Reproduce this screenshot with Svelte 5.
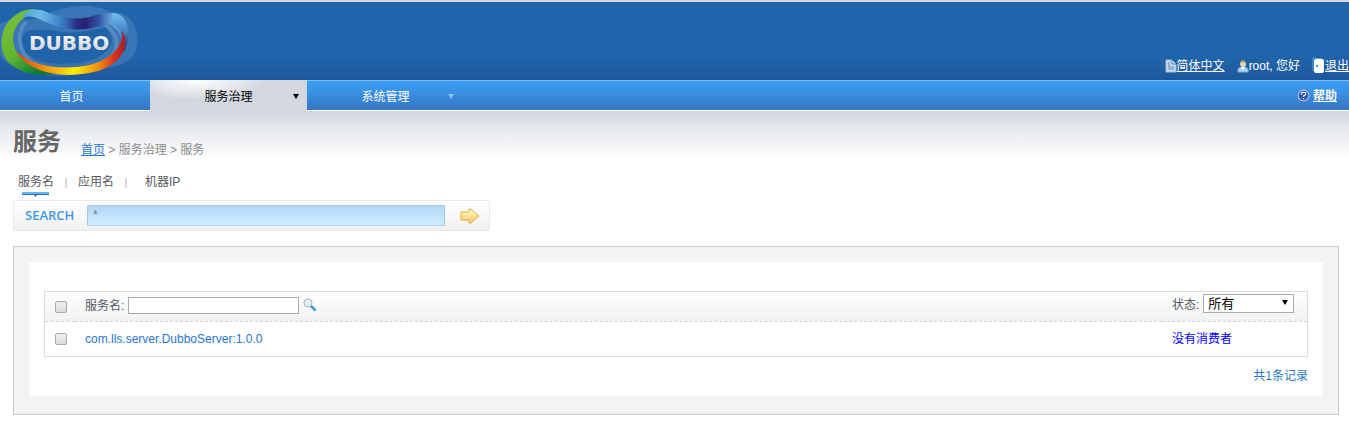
<script lang="ts">
  const tabs = ['服务名', '应用名', '机器IP'];
  const services = [{ name: 'com.lls.server.DubboServer:1.0.0', status: '没有消费者' }];
  let query = $state('*');
  let filter = $state('');
  let status = $state('所有');
</script>

<div class="page">
  <header>
    <a class="logo" href="#home" aria-label="DUBBO">
      <svg width="140" height="78" viewBox="0 2 140 78">
        <defs>
          <linearGradient id="green" x1="0" y1="0" x2="0.65" y2="1">
            <stop offset="0" stop-color="#5eb5a6" /><stop offset=".22" stop-color="#76bd38" />
            <stop offset=".6" stop-color="#64b52f" /><stop offset="1" stop-color="#087a36" />
          </linearGradient>
          <linearGradient id="blue">
            <stop offset="0" stop-color="#4ba8c4" /><stop offset=".17" stop-color="#6abae9" />
            <stop offset=".38" stop-color="#397cc5" /><stop offset=".52" stop-color="#292b80" />
            <stop offset=".6" stop-color="#292173" />
            <stop offset=".72" stop-color="#3052a3" /><stop offset=".88" stop-color="#75bdec" />
            <stop offset="1" stop-color="#3a78c0" />
          </linearGradient>
          <linearGradient id="fire">
            <stop offset="0" stop-color="#e33f18" /><stop offset=".2" stop-color="#ed7a16" />
            <stop offset=".53" stop-color="#ffed00" /><stop offset=".75" stop-color="#f3930f" />
            <stop offset=".9" stop-color="#dc3119" /><stop offset="1" stop-color="#a91e28" />
          </linearGradient>
          <linearGradient id="right" x1="0" y1="0" x2="0" y2="1">
            <stop offset="0" stop-color="#75bdec" /><stop offset=".4" stop-color="#4a8dd0" /><stop offset="1" stop-color="#302063" />
          </linearGradient>
          <linearGradient id="silver" x1="0" y1="0" x2="0" y2="1">
            <stop offset="0" stop-color="#fff" /><stop offset="1" stop-color="#c9cdd1" />
          </linearGradient>
        </defs>
        <path d="M0 24C15 14 28 25 43 15C60 9 72 5 91 6C106 8 110 13 121 13C142 21 142 53 127 61C114 71 94 67 74 74C51 80 31 71 16 65C-5 65-3 37 0 24Z" fill="#7aa5cf" opacity=".28" />
        <path d="M23 48C17 27 34 30 52 30C75 37 94 28 106 28C121 43 106 60 76 63C48 66 28 60 23 48Z" fill="#2163a9" />
        <path d="M26 22C14 35 20 56 36 65M105 24C120 36 120 50 108 60" fill="none" stroke="#86aed2" stroke-width="4" opacity=".35" />
        <path d="M34 9C18 9 5 21 2 36C0 50 4 61 16 68C26 74 37 76 55 74C37 70 22 62 16 51C10 38 13 20 34 13Z" fill="url(#green)" />
        <path d="M22 17C26 9 37 7 49 13C71 21 84 19 96 15C115 10 125 15 128 32L124 53C124 37 117 26 108 24C95 27 84 32 64 28C43 24 38 14 22 17Z" fill="url(#blue)" />
        <path d="M113 13C127 14 129 27 128 40L124 53C124 38 120 27 110 24Z" fill="url(#right)" />
        <path d="M15 50C28 64 52 69 76 67C102 65 124 52 122 31C132 48 118 65 98 71C73 78 32 78 15 50Z" fill="url(#fire)" />
        <text x="29" y="50" fill="url(#silver)">DUBBO</text>
      </svg>
    </a>
    <div class="user">
      <a href="#lang"><svg width="12" height="14" viewBox="0 0 12 14"><path d="M1 1h6l4 4v8H1z" fill="#c6d8ea" stroke="#a6bfd9" /><path d="M7 1v4h4M3 4h2M3 6h2M3 8h6M3 10h6" fill="none" stroke="#5f88b5" /></svg><span>简体中文</span></a>
      <div class="who"><svg width="12" height="14" viewBox="0 0 12 14"><path d="M1 13q-1-5 5-5t5 5z" fill="#a8d4f2" stroke="#7eb0d8" /><path d="m4 8 2 3 2-3z" fill="#fff" /><circle cx="6" cy="5" r="3" fill="#e9d6ae" /><path d="M3 5q0-4 3-4t3 4Q8 3 6 3T3 5" fill="#a39670" /></svg>root, 您好</div>
      <a href="#logout"><svg width="13" height="17" viewBox="0 0 13 17"><path d="M1 14V1l9 1" fill="none" stroke="#5ba2e8" /><rect x="2" y="2" width="10" height="14" rx="2" fill="#fff" /><circle cx="5" cy="9" r="1" fill="#246bb3" /></svg><span>退出</span></a>
    </div>
  </header>

  <nav>
    <a class="item home" href="#home">首页</a>
    <a class="item active" href="#governance">服务治理<i></i></a>
    <a class="item" href="#system">系统管理<i></i></a>
    <a class="help" href="#help"><svg width="13" height="13" viewBox="0 0 12 12"><circle cx="6" cy="6" r="5" fill="#3458ba" stroke="#b8c5df" /><path d="M4 5q0-2 2-2t2 1.5q0 1-2 2v.7M6 8.2v1.2" fill="none" stroke="#fff" stroke-width="1.1" /></svg><span>帮助</span></a>
  </nav>

  <main>
    <div class="heading">
      <h1>服务</h1>
      <div class="crumbs"><a href="#home">首页</a> &gt; 服务治理 &gt; 服务</div>
    </div>
    <div class="tabs">
      {#each tabs as tab, i}
        <a href="#tab{i}" class:current={i === 0}>{tab}{#if i === 0}<svg class="marker" width="27" height="5" viewBox="0 0 27 5"><path d="M0 0h27v2H0z" fill="#65b4f5" /><path d="M0 2h27v1H15l-1.500 2L12 3H0z" fill="#2872bb" /></svg>{/if}</a>
      {/each}
    </div>
    <form class="search" onsubmit={(e) => e.preventDefault()}>
      <label for="query">SEARCH</label>
      <input id="query" bind:value={query} />
      <button aria-label="搜索"><svg width="20" height="16" viewBox="0 0 20 16"><defs><linearGradient id="arrow" x1="0" y1="0" x2="0" y2="1"><stop offset="0" stop-color="#fffbd0" /><stop offset=".5" stop-color="#ffe293" /><stop offset="1" stop-color="#ffc384" /></linearGradient></defs><path d="M1 4h8V1h2l8 7-8 7H9v-3H1z" fill="url(#arrow)" stroke="#dcb044" /></svg></button>
    </form>

    <section class="panel">
      <div class="sheet">
        <table>
          <thead>
            <tr>
              <th class="check"><input type="checkbox" aria-label="全选" /></th>
              <th><div class="field"><label for="filter">服务名:</label><input id="filter" bind:value={filter} />
                <svg width="13" height="13" viewBox="0 0 13 13"><path d="m8 8 4 4" stroke="#3e9fd2" stroke-width="2.5" stroke-linecap="round" /><circle cx="5" cy="5" r="4" fill="#dceeee" stroke="#a9b8ba" /><path d="M3 5q0-2 2-2" fill="none" stroke="#fff" /></svg></div></th>
              <th class="state"><div class="field"><label for="status">状态:</label><div class="select"><select id="status" bind:value={status}><option>所有</option></select><i></i></div></div></th>
            </tr>
          </thead>
          <tbody>
            {#each services as service}
              <tr>
                <td class="check"><input type="checkbox" aria-label={service.name} /></td>
                <td><a href="#service">{service.name}</a></td>
                <td class="none">{service.status}</td>
              </tr>
            {/each}
          </tbody>
        </table>
        <p>共{services.length}条记录</p>
      </div>
    </section>
  </main>
</div>

<style>
  :global(body) { background: #fff; }
  .page { font: 12px/16px "Liberation Sans", Arial, "Noto Sans CJK SC", sans-serif; color: #55585e; }
  svg { display: block; flex: none; }
  a { color: #2877ca; }
  i { border: 3px solid transparent; border-top: 5px solid; border-bottom: 0; }
  header { height: 78px; border-top: 2px solid #d6d9dc; background: linear-gradient(#2064ab 70%, #1d589b); display: flex; justify-content: space-between; align-items: flex-end; }
  .logo { align-self: flex-start; }
  .logo text { font: bold 20px "DejaVu Sans", sans-serif; }
  .user { display: flex; align-items: center; gap: 12px; color: #fff; padding-bottom: 6px; }
  .user a, .who { display: flex; align-items: center; color: #fff; text-decoration: none; }
  .user span, .help span { text-decoration: underline; }
  nav { display: flex; height: 29px; border-top: 1px solid #75bcf7; border-bottom: 1px solid #fff; background: linear-gradient(#3ba1f6, #3875c3); }
  nav a { color: #fff; text-decoration: none; display: flex; align-items: center; }
  .item { width: 157px; justify-content: center; position: relative; box-sizing: border-box; padding-top: 2px; }
  .item.home { width: 150px; padding-right: 7px; }
  .item i { position: absolute; right: 10px; top: 13px; color: #86c5fc; }
  .item.active { color: #000; margin: -1px 0; background: radial-gradient(ellipse at 30% 0, #fff, #d3d8e0 45%); }
  .item.active i { right: 8px; top: 14px; color: #000; }
  .help { margin-left: auto; padding-right: 12px; gap: 3px; font-weight: bold; }
  main { padding: 15px 10px 14px 13px; background: linear-gradient(#cfd4db, #e3e6ea 15px, #fff 48px); }
  .heading { display: flex; align-items: flex-end; gap: 20px; }
  h1 { margin: 0; font-size: 24px; line-height: 32px; color: #666; }
  .crumbs { color: #8c8c8c; }
  .tabs { display: flex; padding: 16px 0 0 5px; }
  .tabs a { color: #55585e; text-decoration: none; position: relative; padding-right: 24px; }
  .tabs a:last-child { padding-left: 7px; }
  .tabs a:not(:last-child)::after { content: ""; position: absolute; right: 11px; top: 4px; width: 2px; height: 10px; background: #d5d8e2; }
  .marker { position: absolute; left: 4px; top: 18px; }
  .search { display: flex; align-items: center; box-sizing: border-box; width: 477px; max-width: 100%; height: 31px; margin-top: 10px; border: 1px solid #e9eaeb; border-radius: 2px; background: linear-gradient(#fff, #f1f1f1); }
  .search label { width: 73px; box-sizing: border-box; padding: 0 0 1px 11px; font: 600 13px/18px "Open Sans", sans-serif; color: #4097e6; }
  .search input { flex: 1; min-width: 0; height: 21px; box-sizing: border-box; border: 1px solid #a5cae6; border-bottom-color: #b2d7eb; padding: 0 5px 2px; font: 12px "Liberation Sans", sans-serif; color: #777; background: linear-gradient(#b3d8f7, #cdedff); }
  button { width: 44px; height: 29px; border: 0; padding: 0 0 0 15px; background: none; }
  .panel { margin-top: 15px; border: 1px solid #ccc; background: #f2f4f4; padding: 15px 15px 18px; }
  .sheet { background: #fff; padding: 29px 15px 12px; }
  table { width: 100%; border-collapse: separate; border-spacing: 0; border: 1px solid #ddd; }
  th, td { padding: 0 0 0 10px; text-align: left; font-weight: normal; }
  th { height: 29px; border-bottom: 1px dashed #d3d3d3; background: linear-gradient(#fff, #f0f1f4); }
  td { height: 33px; padding-bottom: 1px; }
  td a { text-decoration: none; }
  .check { width: 20px; }
  .state { width: 135px; }
  .none { color: #00f; }
  .field { display: flex; align-items: center; gap: 4px; padding-bottom: 3px; }
  .field label { padding-top: 1px; }
  .field svg { margin-bottom: 2px; }
  .state .field { padding-bottom: 6px; }
  .state label { padding-top: 3px; }
  .field input { width: 171px; height: 17px; box-sizing: border-box; border: 1px solid #aaa; padding: 0 2px; font: inherit; }
  .select { position: relative; display: flex; }
  select { appearance: none; width: 91px; height: 19px; border: 1px solid #aaa; border-radius: 0; padding: 0 4px; background: #fff; color: #000; font: 13px/17px "Liberation Sans", "Noto Sans CJK SC", sans-serif; }
  .select i { position: absolute; right: 6px; top: 6px; color: #000; pointer-events: none; }
  input[type="checkbox"] { appearance: none; display: block; width: 12px; height: 12px; margin: 0; border: 1px solid #aaa; border-radius: 2px; background: linear-gradient(#eee, #dcdcdc); box-sizing: border-box; }
  input[type="checkbox"]:checked { background: #3d8fdb; }
  p { margin: 11px 0 0; text-align: right; color: #2877ca; }
</style>
